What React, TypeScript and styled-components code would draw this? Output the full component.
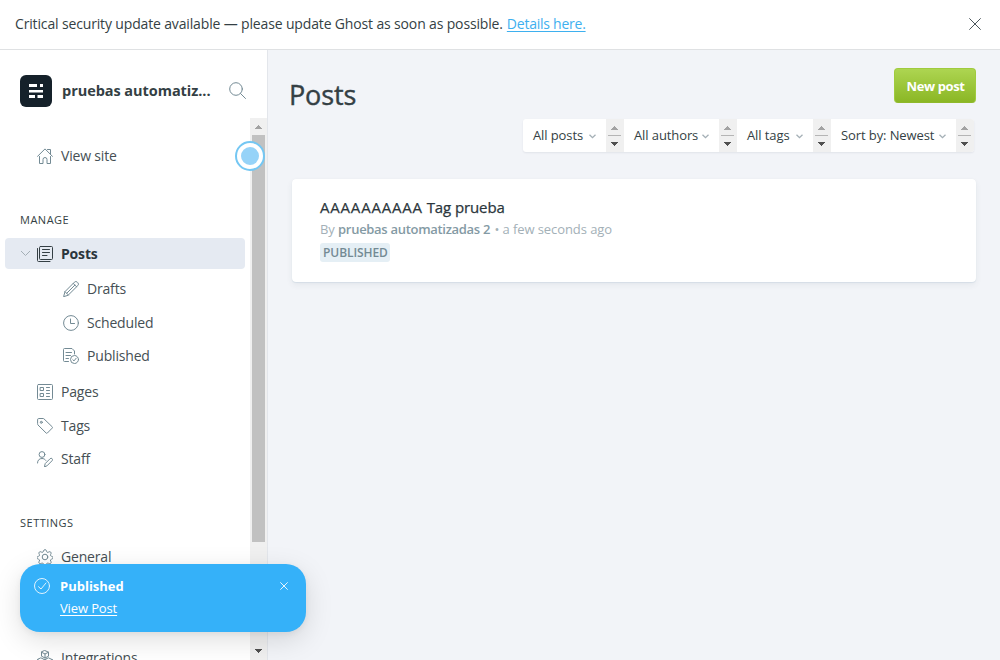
import React from "react";
import styled, { createGlobalStyle } from "styled-components";

const GlobalStyle = createGlobalStyle`
  *, *::before, *::after { box-sizing: border-box; }
  body {
    margin: 0;
    overflow: hidden;
    background: #fff;
    color: #343f44;
    font-family: "Open Sans", "Noto Sans", sans-serif;
    font-size: 14px;
    letter-spacing: -0.15px;
  }
`;

const Page = styled.div`
  height: 660px;
  display: flex;
  flex-direction: column;
`;

/* ---------- update banner ---------- */

const Banner = styled.header`
  flex: none;
  height: 50px;
  display: flex;
  align-items: center;
  justify-content: space-between;
  padding: 0 18px 0 15px;
  border-bottom: 1px solid #dfe1e3;
  line-height: 20px;
`;

const BannerText = styled.span`
  margin-top: -2px;
`;

const BannerLink = styled.a`
  color: #3eb0ef;
  text-decoration: underline;
  text-underline-offset: 2px;
  letter-spacing: -0.24px;
  margin-left: 0.5px;
`;

const IconButton = styled.button<{ $size: number; $color?: string; $top?: number }>`
  display: flex;
  align-items: center;
  justify-content: center;
  width: ${(p) => p.$size}px;
  height: ${(p) => p.$size}px;
  margin-top: ${(p) => p.$top ?? 0}px;
  padding: 0;
  border: 0;
  background: none;
  color: ${(p) => p.$color ?? "inherit"};
`;

const Body = styled.div`
  flex: 1;
  min-height: 0;
  display: flex;
`;

/* ---------- sidebar ---------- */

const Sidebar = styled.nav`
  position: relative;
  flex: none;
  width: 268px;
  display: flex;
  flex-direction: column;
  border-right: 1px solid #e3e6eb;
`;

const SiteHeader = styled.div`
  flex: none;
  height: 68px;
  display: flex;
  align-items: center;
  padding: 14px 21px 0 20px;
`;

const Logo = styled.div`
  width: 32px;
  height: 32px;
  border-radius: 6px;
  background: #15212a;
`;

const SiteName = styled.div`
  flex: 1;
  margin: -2px 0 0 10px;
  font-size: 14.5px;
  font-weight: 700;
  letter-spacing: -0.05px;
  white-space: nowrap;
`;

const ScrollArea = styled.div`
  flex: 1;
  min-height: 0;
  display: flex;
`;

const Menu = styled.div`
  flex: 1;
  overflow: hidden;
  padding: 22px 5px 0;
`;

const MenuHeading = styled.h4<{ $top: number }>`
  margin: ${(p) => p.$top}px 0 0 15px;
  height: 20px;
  font-size: 11px;
  font-weight: 400;
  letter-spacing: 0.5px;
  line-height: 20px;
`;

const MenuItem = styled.a<{ $nested?: boolean; $active?: boolean; $top?: number }>`
  position: relative;
  display: flex;
  align-items: center;
  height: 31px;
  margin-top: ${(p) => p.$top ?? 3}px;
  padding-left: ${(p) => (p.$nested ? 58 : 32)}px;
  gap: 8px;
  border-radius: 4px;
  background: ${(p) => (p.$active ? "#e5eaf2" : "none")};
  color: ${(p) => (p.$active ? "#2b363c" : "#454f54")};
  font-weight: ${(p) => (p.$active ? 700 : 400)};
  letter-spacing: -0.18px;
  line-height: 20px;

  > svg {
    flex: none;
    color: ${(p) => (p.$active ? "#343f44" : "#738a94")};
  }
`;

const Caret = styled.span`
  position: absolute;
  left: 15px;
  top: 12px;
  display: flex;
  color: #a4afb6;
`;

const ScrollTrack = styled.div`
  flex: none;
  width: 17px;
  display: flex;
  flex-direction: column;
  align-items: center;
  background: #f0f0f0;
`;

const ScrollArrow = styled.div<{ $up?: boolean; $h: number; $inset?: number }>`
  flex: none;
  height: ${(p) => p.$h}px;
  padding-top: ${(p) => p.$inset ?? 0}px;
  display: flex;
  align-items: center;
  color: ${(p) => (p.$up ? "#a3a3a3" : "#505050")};
`;

const ScrollThumb = styled.div`
  width: 13px;
  height: 407px;
  margin-bottom: auto;
  background: #c1c1c1;
`;

const Beacon = styled.div`
  position: absolute;
  left: 235px;
  top: 91px;
  width: 30px;
  height: 30px;
  padding: 4px;
  border: 2px solid #74c7f3;
  border-radius: 50%;
  background: #fff;

  &::after {
    content: "";
    display: block;
    width: 18px;
    height: 18px;
    border-radius: 50%;
    background: #96d3f8;
  }
`;

/* ---------- main column ---------- */

const Main = styled.main`
  flex: 1;
  padding: 18px 24px 0 24px;
  background: #f2f4f8;
`;

const TitleRow = styled.div`
  display: flex;
  justify-content: space-between;
  height: 51px;
`;

const Title = styled.h1`
  margin: 8px 0 0 -3px;
  font-size: 27px;
  font-weight: 500;
  letter-spacing: -0.15px;
  line-height: 38px;
  -webkit-text-stroke: 0.4px currentColor;
`;

const PrimaryButton = styled.button`
  width: 82px;
  height: 35px;
  padding: 0 0 0 1px;
  border: 1px solid #a0cb3e;
  border-bottom-color: #8fb92b;
  border-radius: 4px;
  background: linear-gradient(#add551, #8bb725);
  color: #fff;
  font: 700 13px/20px "Open Sans", sans-serif;
  letter-spacing: -0.4px;
  white-space: nowrap;
`;

const Filters = styled.div`
  display: flex;
  width: 451px;
  height: 33px;
  margin: 0 2px 0 auto;
  border-radius: 3px;
  overflow: hidden;
  background: #fff;
  box-shadow: 0 1px 2px rgba(20, 40, 60, 0.08);
`;

const Filter = styled.div<{ $width: number }>`
  flex: none;
  display: flex;
  width: ${(p) => p.$width}px;
`;

const FilterLabel = styled.div`
  flex: 1;
  display: flex;
  align-items: center;
  justify-content: space-between;
  padding: 0 10px 2px 10px;
  font-size: 13px;
  letter-spacing: -0.1px;
  white-space: nowrap;

  > svg {
    flex: none;
    margin-top: 4px;
    color: #a4afb6;
  }
`;

const Spinner = styled.div`
  flex: none;
  width: 18px;
  padding-right: 1px;
  display: flex;
  flex-direction: column;
  align-items: center;
  background: #f0f0f0;
`;

const SpinnerLine = styled.div`
  width: 13px;
  height: 1px;
  background: #b5b5b5;
`;

const PostCard = styled.article`
  margin-top: 27px;
  height: 103px;
  padding: 17px 28px;
  border-radius: 4px;
  background: #fff;
  box-shadow: 0 0 1px rgba(0, 0, 0, 0.06), 0 1px 1px rgba(62, 130, 170, 0.1),
    0 3px 6px rgba(50, 70, 90, 0.07);
`;

const PostTitle = styled.h3`
  margin: 0;
  font-size: 15px;
  font-weight: 500;
  letter-spacing: -0.1px;
  line-height: 22px;
  color: #2b363c;
  -webkit-text-stroke: 0.25px currentColor;
`;

const WideWord = styled.span`
  letter-spacing: 0.8px;
`;

const PostMeta = styled.p`
  margin: 1px 0 0;
  font-size: 13px;
  line-height: 20px;
  letter-spacing: -0.08px;
  white-space: nowrap;
  color: #a3b0b7;

  strong {
    margin-right: 1px;
    font-weight: 600;
    letter-spacing: -0.3px;
    color: #849aa4;
  }
`;

const Badge = styled.span`
  display: block;
  width: 70px;
  height: 19px;
  margin-top: 4px;
  padding-left: 3px;
  border-radius: 3px;
  background: #e5eff5;
  color: #738a94;
  font-size: 12px;
  font-weight: 600;
  letter-spacing: -0.08px;
  line-height: 19px;
`;

/* ---------- toast ---------- */

const Toast = styled.aside`
  position: absolute;
  left: 20px;
  top: 564px;
  width: 286px;
  height: 68px;
  display: flex;
  align-items: flex-start;
  padding: 12px 16px 0 14px;
  border-radius: 20px;
  background: #35b1f9;
  color: #fff;
  box-shadow: 0 2px 6px rgba(0, 0, 0, 0.05), 0 8px 28px rgba(0, 0, 0, 0.13);

  > svg {
    margin-top: 2px;
    opacity: 0.85;
  }
`;

const ToastText = styled.div`
  flex: 1;
  margin-left: 10px;
  font-size: 13px;
  line-height: 20px;
  letter-spacing: 0;
`;

const ToastLink = styled.a`
  display: block;
  margin-top: 2px;
  letter-spacing: -0.13px;
  text-decoration: underline;
  text-underline-offset: 2px;
`;

/* ---------- icons ---------- */

const Icon = ({ children, size = 16 }: { children: React.ReactNode; size?: number }) => (
  <svg
    width={size}
    height={size}
    viewBox={`0 0 ${size} ${size}`}
    fill="none"
    stroke="currentColor"
    strokeWidth={1}
    strokeLinecap="round"
    strokeLinejoin="round"
  >
    {children}
  </svg>
);

const HomeIcon = () => (
  <Icon>
    <path d="M.5 8.400 8 .9l7.500 7.500M10.500 1.500H13.500V6M2.500 8.500v7h3.500v-4a2 2 0 0 1 4 0v4h3.500v-7" />
  </Icon>
);
const PostsIcon = () => (
  <Icon>
    <rect x="2.500" y=".5" width="13" height="13" rx="1" />
    <path d="M.5 2.500v12a1 1 0 0 0 1 1H13M5.500 3.500h7M5.500 6.500h7M5.500 9.500H10" />
  </Icon>
);
const PencilIcon = () => (
  <Icon>
    <path d="M.7 15.300 2 10.600 11.400 1.200a2 2 0 0 1 2.900 0l.5.5a2 2 0 0 1 0 2.900L5.400 14zM2 10.600 5.400 14M10.200 2.400l3.400 3.400M3.800 12.200l8.100-8.100" />
  </Icon>
);
const ClockIcon = () => (
  <Icon>
    <circle cx="8" cy="8" r="7.400" />
    <path d="M7.500 4v4.500h4" />
  </Icon>
);
const PublishedIcon = () => (
  <Icon>
    <path d="M5.500 13.500h-4a1 1 0 0 1-1-1v-11a1 1 0 0 1 1-1H9l2.500 2.500v3M3 4.500h5.500M3 7.500h4.500M3 10.500h2.500" />
    <circle cx="11.500" cy="11.500" r="4" />
    <path d="m9.800 11.700 1.200 1.200 2.200-2.700" />
  </Icon>
);
const PagesIcon = () => (
  <Icon>
    <rect x=".5" y=".5" width="15" height="15" rx="1" />
    <path d="M3.500 3.500h3v3h-3zM3.500 9.500h3v3h-3zM9.500 3.500h3M9.500 6.500h3M9.500 9.500h3M9.500 12.500h3" />
  </Icon>
);
const TagIcon = () => (
  <Icon>
    <path d="M.6 1.500a1 1 0 0 1 1-1H6a1.500 1.500 0 0 1 1 .4l8.200 7.900a.9.9 0 0 1 0 1.300l-4.800 4.900a.9.900 0 0 1-1.300 0L1 7a1.500 1.500 0 0 1-.4-1z" />
    <circle cx="4.300" cy="4.300" r="1" />
  </Icon>
);
const StaffIcon = () => (
  <Icon>
    <circle cx="5" cy="3.500" r="2.900" />
    <path d="M.5 12C.5 9 2.500 7.500 5 7.500c1.700 0 3 .7 3.800 1.900M7.500 15.500l.7-2.900 4.900-4.900a1.300 1.300 0 0 1 2 2l-4.900 4.900z" />
  </Icon>
);
const GearIcon = () => (
  <Icon>
    <circle cx="8" cy="8" r="2.800" />
    <path d="M6.600 1.700a1.450 1.450 0 0 1 2.800 0l.2.800a1.200 1.200 0 0 0 1.700.7l.8-.4a1.450 1.450 0 0 1 1.900 1.900l-.4.800a1.200 1.200 0 0 0 .7 1.700l.6.1a1.450 1.450 0 0 1 0 2.800l-.6.200a1.200 1.200 0 0 0-.7 1.700l.4.700a1.450 1.450 0 0 1-1.900 1.900l-.8-.4a1.200 1.200 0 0 0-1.700.7l-.2.700a1.450 1.450 0 0 1-2.800 0l-.2-.7a1.200 1.200 0 0 0-1.700-.7l-.8.400A1.450 1.450 0 0 1 2 12.700l.4-.7a1.200 1.200 0 0 0-.7-1.700l-.6-.2a1.450 1.450 0 0 1 0-2.800l.6-.1a1.200 1.200 0 0 0 .7-1.700L2 4.700a1.450 1.450 0 0 1 1.900-1.900l.8.400a1.200 1.200 0 0 0 1.700-.7z" />
  </Icon>
);
const CubesIcon = () => (
  <Icon>
    <path d="m8 .6 3.500 1.600v4L8 8 4.500 6.200v-4zM4.500 2.200 8 4l3.500-1.800M8 4v4M4.200 8l3.500 1.700v4l-3.500 1.700-3.600-1.700v-4zM11.800 8l3.600 1.700v4l-3.600 1.700-3.500-1.700v-4zM.6 9.700l3.600 1.700 3.500-1.700M8.300 9.700l3.500 1.700 3.600-1.700" />
  </Icon>
);
const SearchIcon = () => (
  <Icon size={17}>
    <circle cx="7" cy="7" r="6.300" />
    <path d="m11.500 11.500 5 5" />
  </Icon>
);
const CheckIcon = () => (
  <Icon>
    <circle cx="8" cy="8" r="7.500" />
    <path d="M4.500 8.700 7 11l5-6" />
  </Icon>
);
const CloseIcon = ({ size }: { size: number }) => (
  <Icon size={size}>
    <path d={`M.6.6 ${size - 0.6} ${size - 0.6}M${size - 0.6} .6.6 ${size - 0.6}`} />
  </Icon>
);
const SmallChevron = () => (
  <svg width="7" height="5" viewBox="0 0 7 5" fill="none" stroke="currentColor" strokeWidth="1.300">
    <path d="m.5.700 3 3 3-3" />
  </svg>
);
const Triangle = ({ up }: { up?: boolean }) => (
  <svg width="7" height="4" viewBox="0 0 7 4" fill="currentColor" shapeRendering="crispEdges">
    <path d={up ? "M3 0h1v1h1v1h1v1h1v1H0V3h1V2h1V1h1z" : "M0 0h7v1H6v1H5v1H4v1H3V3H2V2H1V1H0z"} />
  </svg>
);

const filters = [
  { label: "All posts", width: 101 },
  { label: "All authors", width: 113 },
  { label: "All tags", width: 94 },
  { label: "Sort by: Newest", width: 143 },
];

export default function App() {
  return (
    <Page>
      <GlobalStyle />
      <Banner>
        <BannerText>
          Critical security update available — please update Ghost as soon as possible.{" "}
          <BannerLink>Details here.</BannerLink>
        </BannerText>
        <IconButton $size={14} $color="#4a555b" $top={-2} aria-label="Close">
          <CloseIcon size={12} />
        </IconButton>
      </Banner>

      <Body>
        <Sidebar>
          <SiteHeader>
            <Logo>
              <svg width="32" height="32" viewBox="0 0 32 32" fill="#fff">
                <path d="M9 9h8v3H9zM20 9h3v3h-3zM9 15h14v2.500H9zM9 20h6v3H9zM17.500 20H23v3h-5.500z" />
              </svg>
            </Logo>
            <SiteName>pruebas automatiz...</SiteName>
            <IconButton $size={17} $color="#738a94" $top={-1} aria-label="Search">
              <SearchIcon />
            </IconButton>
          </SiteHeader>
          <ScrollArea>
            <Menu>
              <MenuItem $top={0}><HomeIcon />View site</MenuItem>
              <MenuHeading $top={39}>MANAGE</MenuHeading>
              <MenuItem $active $top={8}>
                <Caret>
                  <svg width="11" height="7" viewBox="0 0 11 7" fill="none" stroke="currentColor">
                    <path d="m1 1 4.500 4.500L10 1" />
                  </svg>
                </Caret>
                <PostsIcon />Posts
              </MenuItem>
              <MenuItem $nested $top={4}><PencilIcon />Drafts</MenuItem>
              <MenuItem $nested><ClockIcon />Scheduled</MenuItem>
              <MenuItem $nested $top={2}><PublishedIcon />Published</MenuItem>
              <MenuItem $top={5}><PagesIcon />Pages</MenuItem>
              <MenuItem><TagIcon />Tags</MenuItem>
              <MenuItem $top={2}><StaffIcon />Staff</MenuItem>
              <MenuHeading $top={39}>SETTINGS</MenuHeading>
              <MenuItem $top={8}><GearIcon />General</MenuItem>
              <MenuItem $top={70}><CubesIcon />Integrations</MenuItem>
            </Menu>
            <ScrollTrack>
              <ScrollArrow $up $h={17}><Triangle up /></ScrollArrow>
              <ScrollThumb />
              <ScrollArrow $h={18}><Triangle /></ScrollArrow>
            </ScrollTrack>
          </ScrollArea>
          <Beacon />
        </Sidebar>

        <Main>
          <TitleRow>
            <Title>Posts</Title>
            <PrimaryButton>New post</PrimaryButton>
          </TitleRow>
          <Filters>
            {filters.map((f) => (
              <Filter key={f.label} $width={f.width}>
                <FilterLabel>
                  {f.label}
                  <SmallChevron />
                </FilterLabel>
                <Spinner>
                  <ScrollArrow $up $h={16} $inset={2}><Triangle up /></ScrollArrow>
                  <SpinnerLine />
                  <ScrollArrow $h={16}><Triangle /></ScrollArrow>
                </Spinner>
              </Filter>
            ))}
          </Filters>
          <PostCard>
            <PostTitle><WideWord>AAAAAAAAAA</WideWord> Tag prueba</PostTitle>
            <PostMeta>
              By <strong>pruebas automatizadas 2</strong> • a few seconds ago
            </PostMeta>
            <Badge>PUBLISHED</Badge>
          </PostCard>
        </Main>
      </Body>

      <Toast>
        <CheckIcon />
        <ToastText>
          <strong>Published</strong>
          <ToastLink>View Post</ToastLink>
        </ToastText>
        <IconButton $size={12} $top={4} $color="#e6f5fe" aria-label="Dismiss">
          <CloseIcon size={8} />
        </IconButton>
      </Toast>
    </Page>
  );
}
